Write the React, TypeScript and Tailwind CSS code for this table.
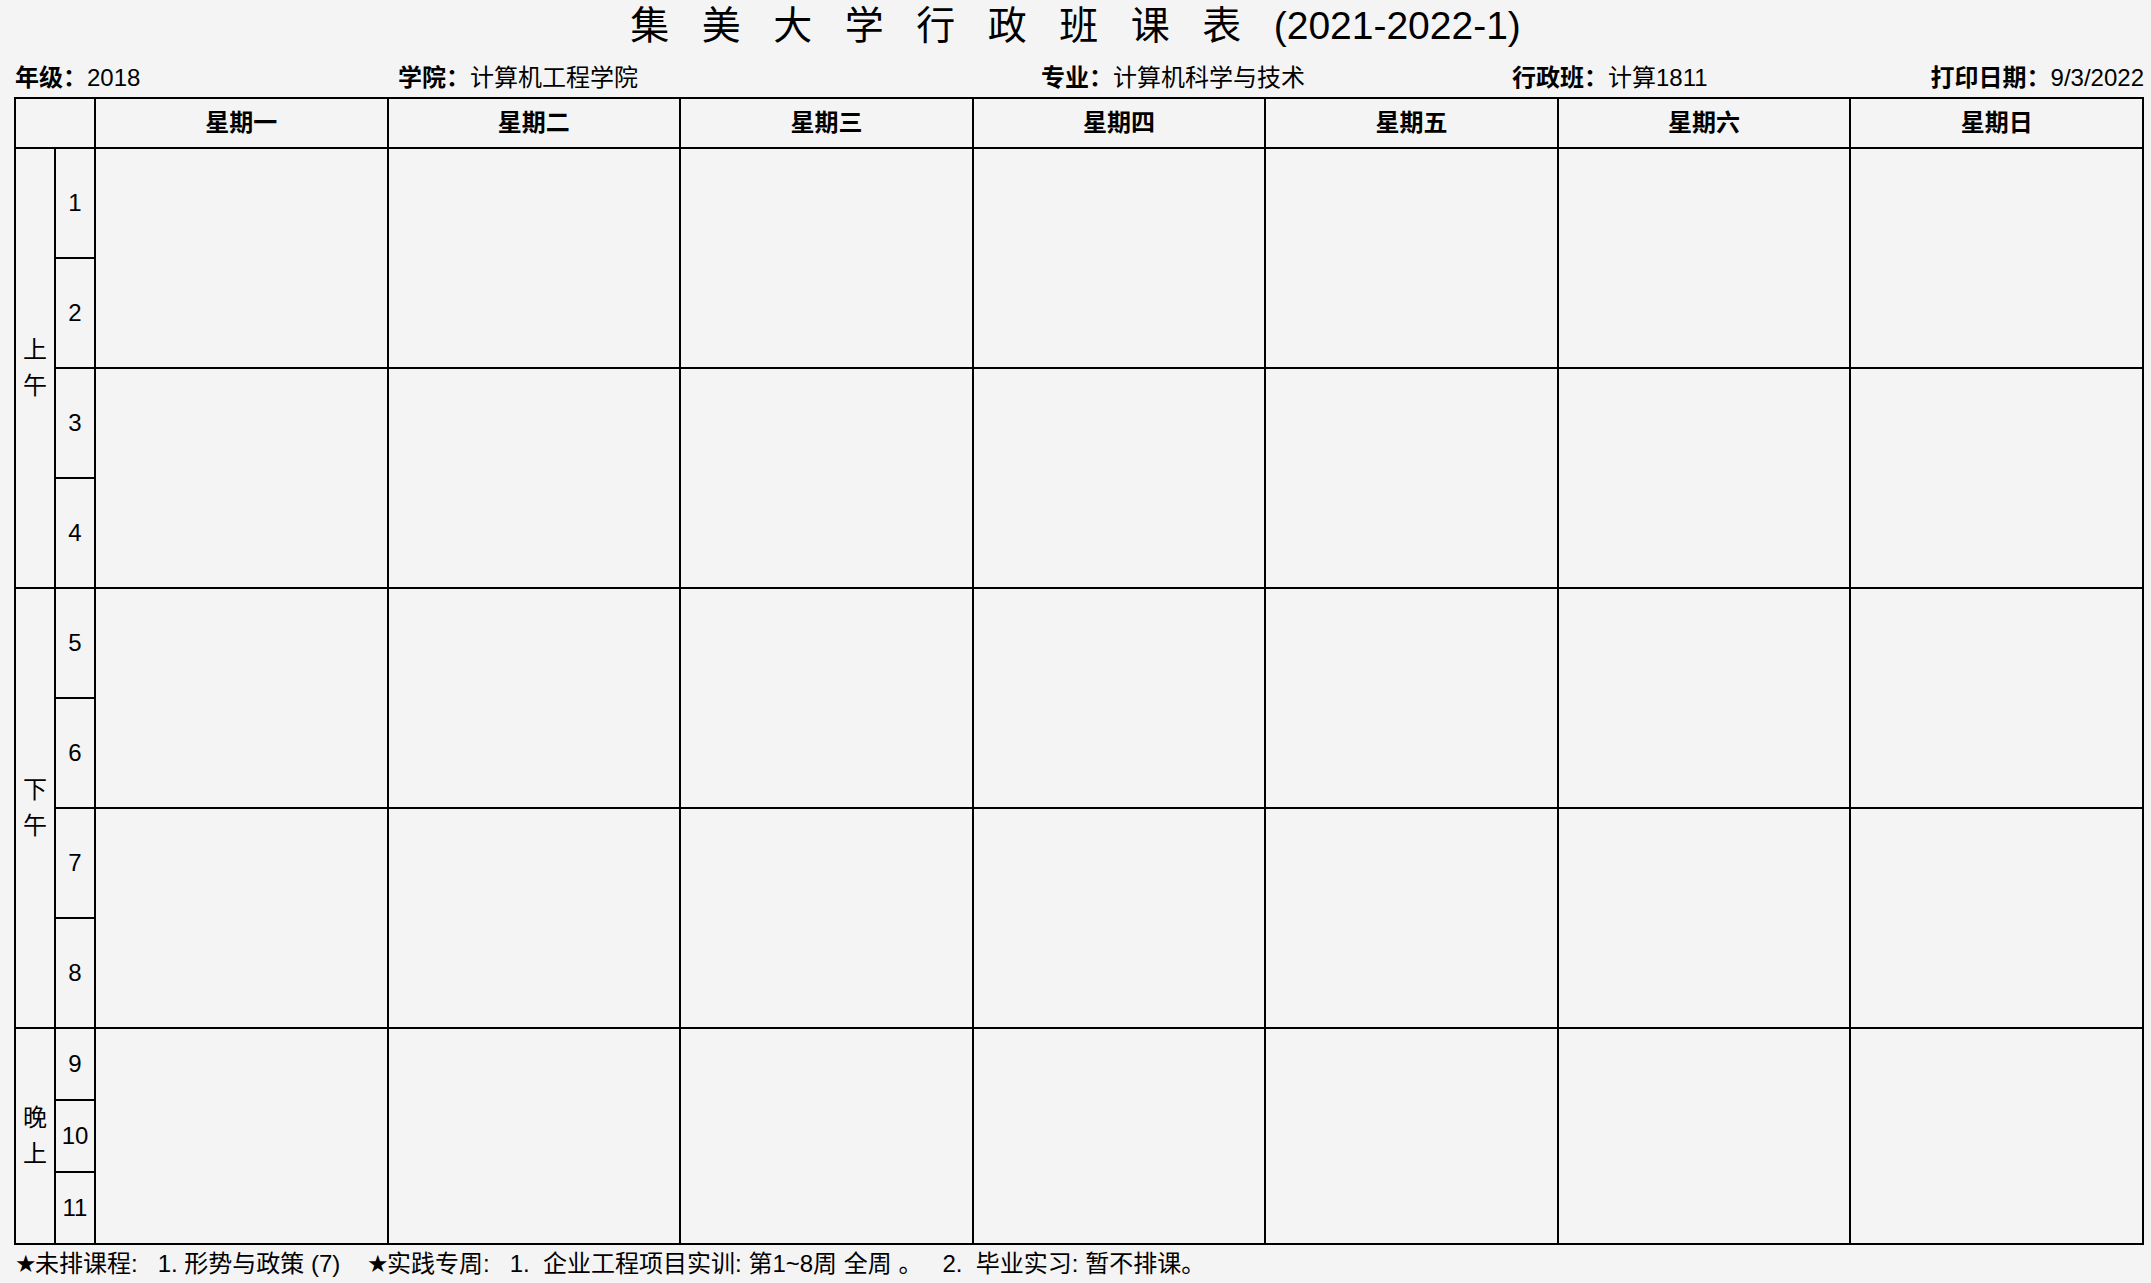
import React from "react";

const days = ["星期一", "星期二", "星期三", "星期四", "星期五", "星期六", "星期日"];
const titleChars = ["集", "美", "大", "学", "行", "政", "班", "课", "表"];

function DayCells({ span }: { span: number }) {
  return (
    <>
      {days.map((d) => (
        <td key={d} rowSpan={span} className="border-2 border-black"></td>
      ))}
    </>
  );
}

function Session({ a, b, span }: { a: string; b: string; span: number }) {
  return (
    <td rowSpan={span} className="border-2 border-black text-center align-middle leading-[36px]">
      {a}
      <br />
      {b}
    </td>
  );
}

function Num({ n }: { n: number }) {
  return <td className="border-2 border-black text-center align-middle">{n}</td>;
}

export default function App() {
  const sp = "\u00a0\u00a0\u00a0";
  return (
    <div className="w-[2151px] h-[1283px] bg-[#f4f4f4] text-black font-['Liberation_Sans','Noto_Sans_CJK_SC',sans-serif] overflow-hidden">
      <div className="h-[51px] flex items-center justify-center text-[39px] leading-[51px] whitespace-pre">
        {titleChars.join(sp) + sp + "(2021-2022-1)"}
      </div>
      <div className="h-[46px] pt-[7px] flex items-center text-[24px] leading-[39px] pl-[15px] pr-[7px]">
        <div className="w-[383px] shrink-0">
          <span className="font-bold">年级：</span>2018
        </div>
        <div className="w-[643px] shrink-0">
          <span className="font-bold">学院：</span>计算机工程学院
        </div>
        <div className="w-[471px] shrink-0">
          <span className="font-bold">专业：</span>计算机科学与技术
        </div>
        <div className="flex-1">
          <span className="font-bold">行政班：</span>计算1811
        </div>
        <div className="shrink-0">
          <span className="font-bold">打印日期：</span>9/3/2022
        </div>
      </div>
      <table className="ml-[14px] w-[2130px] table-fixed border-collapse text-[24px]">
        <colgroup>
          <col className="w-[40px]" />
          <col className="w-[40px]" />
          {days.map((d) => (
            <col key={d} />
          ))}
        </colgroup>
        <thead>
          <tr className="h-[50px]">
            <th colSpan={2} className="border-2 border-black"></th>
            {days.map((d) => (
              <th key={d} className="border-2 border-black font-bold text-center align-middle">
                {d}
              </th>
            ))}
          </tr>
        </thead>
        <tbody>
          <tr className="h-[110px]">
            <Session a="上" b="午" span={4} />
            <Num n={1} />
            <DayCells span={2} />
          </tr>
          <tr className="h-[110px]">
            <Num n={2} />
          </tr>
          <tr className="h-[110px]">
            <Num n={3} />
            <DayCells span={2} />
          </tr>
          <tr className="h-[110px]">
            <Num n={4} />
          </tr>
          <tr className="h-[110px]">
            <Session a="下" b="午" span={4} />
            <Num n={5} />
            <DayCells span={2} />
          </tr>
          <tr className="h-[110px]">
            <Num n={6} />
          </tr>
          <tr className="h-[110px]">
            <Num n={7} />
            <DayCells span={2} />
          </tr>
          <tr className="h-[110px]">
            <Num n={8} />
          </tr>
          <tr className="h-[72px]">
            <Session a="晚" b="上" span={3} />
            <Num n={9} />
            <DayCells span={3} />
          </tr>
          <tr className="h-[72px]">
            <Num n={10} />
          </tr>
          <tr className="h-[72px]">
            <Num n={11} />
          </tr>
        </tbody>
      </table>
      <div className="pl-[15px] text-[24px] leading-[38px] whitespace-pre">
        <span className="inline-block w-[20px] font-['DejaVu_Sans',sans-serif]">★</span>
        {"未排课程:   1. 形势与政策 (7)    "}
        <span className="inline-block w-[20px] font-['DejaVu_Sans',sans-serif]">★</span>
        {"实践专周:   1.  企业工程项目实训: 第1~8周 全周 。   2.  毕业实习: 暂不排课。"}
      </div>
    </div>
  );
}
